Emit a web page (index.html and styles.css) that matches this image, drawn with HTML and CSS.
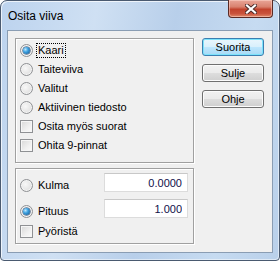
FILE: index.html
```html
<!DOCTYPE html>
<html lang="fi">
<head>
  <meta charset="UTF-8">
  <title>Osita viiva</title>
  <link rel="stylesheet" href="styles.css">
</head>
<body>
  <div class="window">
    <div class="titlebar">
      <span class="title">Osita viiva</span>
      <div class="close">
        <svg viewBox="0 0 12 10" width="12" height="10">
          <path class="x-shadow" d="M2 1.5 L10 8.5 M10 1.5 L2 8.5" />
          <path class="x-mark" d="M2 1.5 L10 8.5 M10 1.5 L2 8.5" />
        </svg>
      </div>
    </div>

    <div class="client">
      <div class="groups">
        <div class="group group-mode">
          <label class="opt"><span class="radio checked"></span><span class="text focus">Kaari</span></label>
          <label class="opt"><span class="radio"></span><span class="text">Taiteviiva</span></label>
          <label class="opt"><span class="radio"></span><span class="text">Valitut</span></label>
          <label class="opt"><span class="radio"></span><span class="text">Aktiivinen tiedosto</span></label>
          <label class="opt"><span class="check"></span><span class="text">Osita myös suorat</span></label>
          <label class="opt"><span class="check"></span><span class="text">Ohita 9-pinnat</span></label>
        </div>

        <div class="group group-size">
          <div class="field">
            <label class="opt"><span class="radio"></span><span class="text">Kulma</span></label>
            <input class="num" type="text" value="0.0000">
          </div>
          <div class="field">
            <label class="opt"><span class="radio checked"></span><span class="text">Pituus</span></label>
            <input class="num" type="text" value="1.000">
          </div>
          <label class="opt opt-last"><span class="check"></span><span class="text">Pyöristä</span></label>
        </div>
      </div>

      <div class="buttons">
        <button class="btn default">Suorita</button>
        <button class="btn">Sulje</button>
        <button class="btn">Ohje</button>
      </div>
    </div>
  </div>
</body>
</html>
```

FILE: styles.css
```css
body {
  margin: 0;
  padding: 0;
  width: 280px;
  height: 261px;
  overflow: hidden;
  background: #fff;
  font-family: 'Liberation Sans', Arial, sans-serif;
  font-size: 11px;
  color: #000;
}

.window {
  width: 280px;
  height: 261px;
  box-sizing: border-box;
  border: 1px solid #4a5a70;
  border-radius: 7px 7px 4px 4px;
  background: linear-gradient(100deg, #bcd3ee 0%, #cfe0f3 30%, #b8cfea 55%, #c6dbf1 80%, #b9d0ea 100%);
  box-shadow: inset 1px 1px 0 rgba(255, 255, 255, 0.7), inset -1px -1px 0 rgba(255, 255, 255, 0.5);
  display: flex;
  flex-direction: column;
}

.titlebar {
  height: 29px;
  display: flex;
  align-items: flex-start;
  justify-content: space-between;
  padding: 0 6px 0 7px;
}

.title {
  font-size: 12px;
  line-height: 12px;
  margin-top: 9px;
  color: #000;
}

.close {
  width: 45px;
  height: 18px;
  margin-top: -1px;
  box-sizing: border-box;
  border: 1px solid #5a2a24;
  border-top: none;
  border-radius: 0 0 4px 4px;
  background: linear-gradient(#e9a698 0%, #d9826f 40%, #c2432d 55%, #c9533c 80%, #e08a6a 100%);
  box-shadow: inset 0 0 0 1px rgba(255, 220, 210, 0.5);
  display: flex;
  align-items: center;
  justify-content: center;
}

.x-shadow {
  fill: none;
  stroke: #4a2a28;
  stroke-width: 4;
  stroke-linecap: square;
}
.x-mark {
  fill: none;
  stroke: #fff;
  stroke-width: 2.2;
  stroke-linecap: square;
}

.client {
  flex-grow: 1;
  margin: 0 6px 7px;
  border: 1px solid #8a9db3;
  background: #f0f0f0;
  display: flex;
  padding: 7px 0 0 7px;
}

.groups {
  display: flex;
  flex-direction: column;
  gap: 5px;
}

.group {
  width: 179px;
  box-sizing: border-box;
  border: 1px solid #a0a0a0;
  box-shadow: inset 1px 1px 0 #fff, 1px 1px 0 #fff;
}

.group-mode {
  height: 125px;
  padding: 2px 0 0 4px;
}

.group-size {
  height: 76px;
  padding: 4px 0 0 4px;
}

.opt {
  display: flex;
  align-items: center;
  height: 19px;
}

.text {
  margin-left: 3px;
  padding: 0 1px;
  border: 1px solid transparent;
  line-height: 13px;
  white-space: nowrap;
}
.text.focus {
  border: 1px dotted #000;
}

.radio {
  width: 13px;
  height: 13px;
  box-sizing: border-box;
  border-radius: 50%;
  border: 1px solid #8f9194;
  background: radial-gradient(circle at 40% 40%, #f8f8f8 0%, #e6e6e6 55%, #d0d0d0 100%);
  box-shadow: inset 0 0 0 1px #f4f4f4;
  display: flex;
  align-items: center;
  justify-content: center;
  flex-shrink: 0;
}
.radio.checked::after {
  content: '';
  width: 7px;
  height: 7px;
  border-radius: 50%;
  background: radial-gradient(circle at 35% 35%, #bfe8ff 0%, #3aa0e0 40%, #17508a 100%);
  box-shadow: 0 0 0 0.5px #1d3f66;
}

.check {
  width: 13px;
  height: 13px;
  box-sizing: border-box;
  border: 1px solid #8f9194;
  background: linear-gradient(135deg, #d8d8d8 0%, #f0f0f0 60%, #fbfbfb 100%);
  box-shadow: inset 0 0 0 1px #f6f6f6;
  flex-shrink: 0;
}

.field {
  display: flex;
  justify-content: space-between;
  align-items: flex-end;
  height: 19px;
  margin-bottom: 7px;
}
.field .opt {
  height: 13px;
}

.num {
  width: 84px;
  height: 19px;
  margin-right: 5px;
  box-sizing: border-box;
  border: 1px solid #dcdcdc;
  border-top-color: #c8c8c8;
  background: #fff;
  font-family: 'Liberation Sans', Arial, sans-serif;
  font-size: 11px;
  color: #10104a;
  text-align: right;
  padding: 0 5px 0 0;
  outline: none;
}

.opt-last {
  height: 13px;
}

.buttons {
  display: flex;
  flex-direction: column;
  margin-left: 8px;
  gap: 8px;
}

.btn {
  width: 62px;
  height: 18px;
  padding: 0;
  box-sizing: border-box;
  border: 1px solid #707070;
  border-radius: 3px;
  background: linear-gradient(#f2f2f2 0%, #ebebeb 48%, #dddddd 52%, #cfcfcf 100%);
  box-shadow: inset 0 0 0 1px #fcfcfc;
  font-family: 'Liberation Sans', Arial, sans-serif;
  font-size: 11px;
  color: #000;
  line-height: 14px;
}
.btn.default {
  border-color: #3c7fb1;
  background: linear-gradient(#eaf6fd 0%, #d9f0fc 48%, #bee6fd 52%, #a7d9f5 100%);
  box-shadow: inset 0 0 0 1px #7ce3fb;
}
```
